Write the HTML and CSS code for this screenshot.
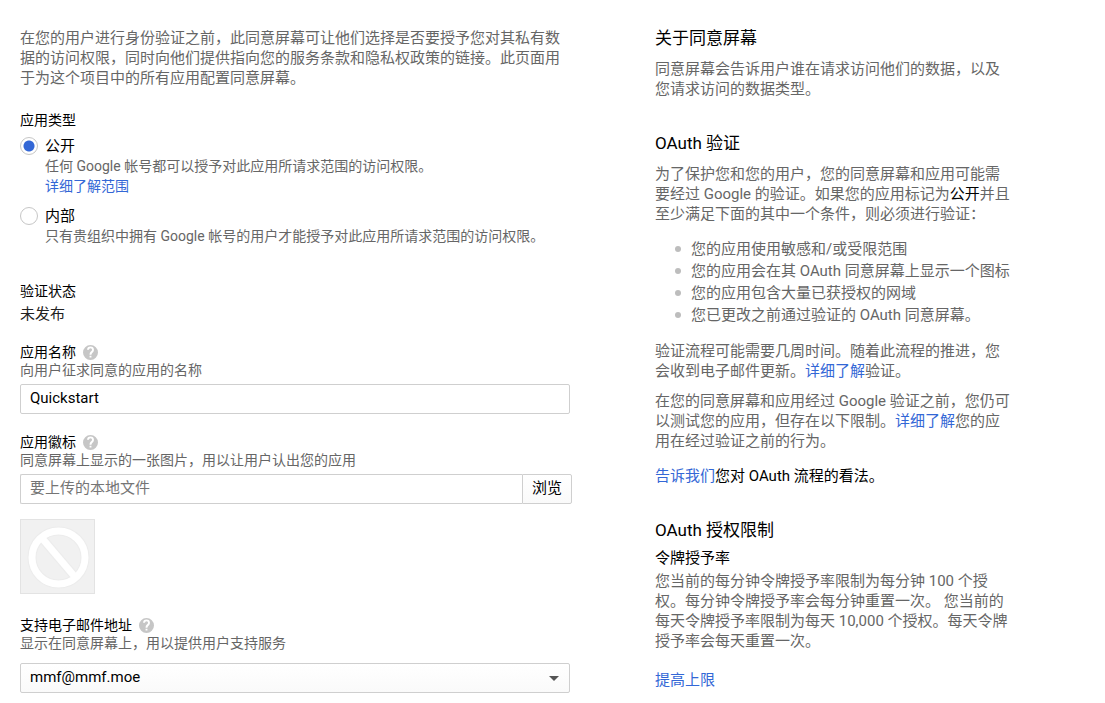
FILE: index.html
```html
<!DOCTYPE html>
<html lang="zh-CN">
<head>
<meta charset="utf-8">
<meta name="viewport" content="width=device-width, initial-scale=1">
<title>OAuth 同意屏幕</title>
<link rel="stylesheet" href="styles.css">
</head>
<body>
<svg class="sprite" aria-hidden="true">
  <symbol id="help" viewBox="0 0 24 24">
    <path d="M12 0a12 12 0 1 0 0 24 12 12 0 0 0 0-24zm1.500 20h-3v-3h3zm2.900-8.900-1.200 1.300c-1.100 1.100-1.700 1.900-1.700 3.100h-3v-.8c0-1.500.7-2.700 1.700-3.800l1.600-1.600c.5-.5.7-1 .7-1.600a2.500 2.500 0 0 0-5 0H6.500a5.500 5.500 0 0 1 11 0c0 1.300-.4 2.500-1.100 3.400z"/>
  </symbol>
</svg>
<div class="page">
  <main>
    <p class="intro">在您的用户进行身份验证之前，此同意屏幕可让他们选择是否要授予您对其私有数据的访问权限，同时向他们提供指向您的服务条款和隐私权政策的链接。此页面用于为这个项目中的所有应用配置同意屏幕。</p>

    <fieldset class="types">
      <legend>应用类型</legend>
      <div class="option">
        <input type="radio" name="type" id="public" checked>
        <div>
          <label for="public">公开</label>
          <p>任何 Google 帐号都可以授予对此应用所请求范围的访问权限。</p>
          <a href="#">详细了解范围</a>
        </div>
      </div>
      <div class="option">
        <input type="radio" name="type" id="internal">
        <div>
          <label for="internal">内部</label>
          <p>只有贵组织中拥有 Google 帐号的用户才能授予对此应用所请求范围的访问权限。</p>
        </div>
      </div>
    </fieldset>

    <section class="status">
      <h3>验证状态</h3>
      <p>未发布</p>
    </section>

    <div class="field">
      <div class="caption"><label for="name">应用名称</label><svg class="help"><use href="#help"/></svg></div>
      <p class="hint">向用户征求同意的应用的名称</p>
      <input class="box" type="text" id="name" value="Quickstart">
    </div>

    <div class="field">
      <div class="caption"><label for="logo">应用徽标</label><svg class="help"><use href="#help"/></svg></div>
      <p class="hint">同意屏幕上显示的一张图片，用以让用户认出您的应用</p>
      <div class="upload">
        <input class="box" type="text" id="logo" placeholder="要上传的本地文件">
        <button type="button">浏览</button>
      </div>
      <div class="preview">
        <svg viewBox="0 0 73 73" aria-hidden="true">
          <g class="halo"><circle cx="37.500" cy="37.500" r="26.500"/><path d="M20 17l34 40"/></g>
          <g class="sign"><circle cx="37.500" cy="37.500" r="26.500"/><path d="M20 17l34 40"/></g>
        </svg>
      </div>
    </div>

    <div class="field email">
      <div class="caption"><label for="email">支持电子邮件地址</label><svg class="help"><use href="#help"/></svg></div>
      <p class="hint">显示在同意屏幕上，用以提供用户支持服务</p>
      <div class="picker">
        <select class="box" id="email"><option>mmf@mmf.moe</option></select>
      </div>
    </div>
  </main>

  <aside>
    <section>
      <h2>关于同意屏幕</h2>
      <p>同意屏幕会告诉用户谁在请求访问他们的数据，以及您请求访问的数据类型。</p>
    </section>
    <section>
      <h2>OAuth 验证</h2>
      <p>为了保护您和您的用户，您的同意屏幕和应用可能需要经过 Google 的验证。如果您的应用标记为<strong>公开</strong>并且至少满足下面的其中一个条件，则必须进行验证：</p>
      <ul>
        <li>您的应用使用敏感和/或受限范围</li>
        <li>您的应用会在其 OAuth 同意屏幕上显示一个图标</li>
        <li>您的应用包含大量已获授权的网域</li>
        <li>您已更改之前通过验证的 OAuth 同意屏幕。</li>
      </ul>
      <p>验证流程可能需要几周时间。随着此流程的推进，您会收到电子邮件更新。<a href="#">详细了解</a>验证。</p>
      <p>在您的同意屏幕和应用经过 Google 验证之前，您仍可以测试您的应用，但存在以下限制。<a href="#">详细了解</a>您的应用在经过验证之前的行为。</p>
      <p class="feedback"><a href="#">告诉我们</a>您对 OAuth 流程的看法。</p>
    </section>
    <section class="limits">
      <h2>OAuth 授权限制</h2>
      <h3>令牌授予率</h3>
      <p>您当前的每分钟令牌授予率限制为每分钟 100 个授权。每分钟令牌授予率会每分钟重置一次。 您当前的每天令牌授予率限制为每天 10,000 个授权。每天令牌授予率会每天重置一次。</p>
      <a class="raise" href="#">提高上限</a>
    </section>
  </aside>
</div>
</body>
</html>
```

FILE: styles.css
```css
* { box-sizing: border-box; }

body {
  margin: 0;
  background: #fff;
  color: #000;
  font: 15px/20px Roboto, "Noto Sans CJK SC", sans-serif;
}

p, h2, h3, ul, fieldset { margin: 0; padding: 0; font-weight: 400; }
a { color: #3367d6; text-decoration: none; }
input, select, button { font: inherit; color: inherit; }
.sprite { display: none; }

.page {
  display: grid;
  grid-template-columns: minmax(0, 552px) minmax(0, 357px);
  column-gap: 83px;
  padding: 28px 20px 10px;
}

.intro { color: #666; }

.types { margin-top: 22px; border: 0; min-width: 0; }
legend { padding: 0; margin-bottom: 6px; font-size: 14px; }
.option { display: flex; gap: 7px; }
.option + .option { margin-top: 10px; }
.option label, .option a { display: block; }
.option p, .option a { font-size: 14px; }
.option p { color: #666; }

.option input {
  appearance: none;
  flex: none;
  width: 18px;
  height: 18px;
  margin: 1px 0 0;
  border: 1px solid #c6c6c6;
  border-radius: 50%;
  background: #fff;
}

.option input:checked {
  background: radial-gradient(circle, #3367d6 5px, #fff 6px);
}

.status { margin: 35px 0 19px; }
.status h3 { font-size: 14px; margin-bottom: 3px; }
.status p { color: #212121; }

.field { margin-bottom: 19px; }
.caption { display: flex; align-items: center; gap: 7px; font-size: 14px; line-height: 18px; }
.help { width: 15px; height: 15px; fill: #c6c6c6; }
.hint { color: #666; font-size: 14px; line-height: 18px; margin-bottom: 5px; }

.box {
  display: block;
  width: 100%;
  max-width: 550px;
  height: 30px;
  padding: 0 9px 2px;
  border: 1px solid #cfcfcf;
  border-radius: 2px;
  background: #fff;
}

.box::placeholder { color: #757575; opacity: 1; }

.upload { display: flex; }
.upload .box { flex: 1; min-width: 0; border-right: 0; border-radius: 2px 0 0 2px; }
.upload button {
  width: 50px;
  padding: 0 0 2px;
  border: 1px solid #cfcfcf;
  border-radius: 0 2px 2px 0;
  background: linear-gradient(#fff, #fafafa);
}

.preview {
  width: 75px;
  height: 75px;
  margin: 15px 0 22px;
  border: 1px solid #e3e3e3;
  background: #f1f1f1;
}
.preview svg { display: block; fill: none; }
.halo { stroke: #ececec; stroke-width: 9; }
.sign { stroke: #fff; stroke-width: 7; }

.email { margin-bottom: 0; }
.email .hint { margin-bottom: 11px; }
.picker { position: relative; max-width: 550px; }
.picker .box { appearance: none; background: linear-gradient(#fff, #fafafa); }
.picker::after {
  content: "";
  position: absolute;
  right: 11px;
  top: 13px;
  border: 5px solid transparent;
  border-top-color: #555;
  border-bottom: 0;
  pointer-events: none;
}

aside { color: #666; }
aside section { margin-bottom: 34px; }
aside h2 { margin-bottom: 11px; color: #000; font-size: 17px; }
aside h3 { color: #000; font-size: 15px; margin-bottom: 3px; }
aside p + p { margin-top: 10px; }
aside strong { color: #000; font-weight: 400; }

ul { list-style: none; }
aside ul { margin: 14px 0 15px 20px; }
li { display: flex; align-items: center; gap: 10px; line-height: 22px; }
li::before {
  content: "";
  flex: none;
  width: 6px;
  height: 6px;
  border-radius: 50%;
  background: #bdbdbd;
}

aside .feedback { margin-top: 15px; color: #000; }
.limits h2 { margin-bottom: 8px; }
aside .limits { margin-bottom: 0; }
.raise { display: inline-block; margin-top: 19px; }
```
